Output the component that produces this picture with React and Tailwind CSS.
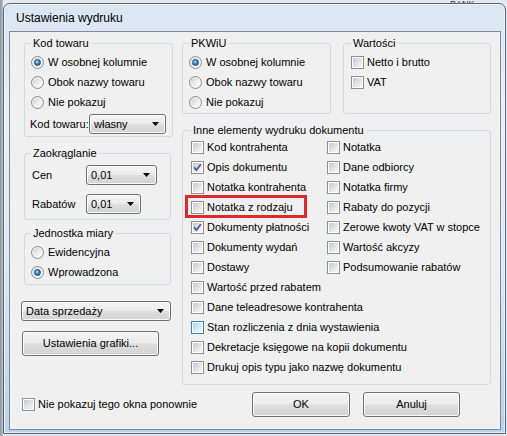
import React from 'react';

const INNE_GRID = [
  [{ label: 'Kod kontrahenta' }, { label: 'Notatka' }],
  [{ label: 'Opis dokumentu', checked: true }, { label: 'Dane odbiorcy' }],
  [{ label: 'Notatka kontrahenta' }, { label: 'Notatka firmy' }],
  [{ label: 'Notatka z rodzaju', marked: true }, { label: 'Rabaty do pozycji' }],
  [{ label: 'Dokumenty płatności', checked: true }, { label: 'Zerowe kwoty VAT w stopce' }],
  [{ label: 'Dokumenty wydań' }, { label: 'Wartość akcyzy' }],
  [{ label: 'Dostawy' }, { label: 'Podsumowanie rabatów' }],
];

const INNE_WIDE = [
  { label: 'Wartość przed rabatem' },
  { label: 'Dane teleadresowe kontrahenta' },
  { label: 'Stan rozliczenia z dnia wystawienia', hover: true },
  { label: 'Dekretacje księgowe na kopii dokumentu' },
  { label: 'Drukuj opis typu jako nazwę dokumentu' },
];

function Radio({ label, checked }) {
  return (
    <div className="flex h-[20px] items-center gap-[4px]">
      <span className="flex h-[13px] w-[13px] shrink-0 items-center justify-center rounded-full border border-[#8b8c8d] bg-[linear-gradient(135deg,#c9cacb_0%,#eeeeee_55%,#ffffff_100%)] shadow-[inset_0_0_0_1px_#f4f4f4]">
        {checked && (
          <span className="h-[7px] w-[7px] rounded-full border border-[#174f80] bg-[radial-gradient(circle_at_40%_35%,#b7e2fb_0%,#3c8bcc_45%,#134a7e_100%)]" />
        )}
      </span>
      <span>{label}</span>
    </div>
  );
}

function Check({ label, checked, hover }) {
  return (
    <div className="flex h-[20px] items-center gap-[3px]">
      <span
        className={`relative flex h-[13px] w-[13px] shrink-0 items-center justify-center border bg-white ${
          hover ? 'border-[#3c7fb1]' : 'border-[#8e8f8f]'
        }`}
      >
        <span
          className={`h-[9px] w-[9px] ${
            hover
              ? 'bg-[linear-gradient(135deg,#9fd5f6_0%,#d6effc_60%,#eef9fe_100%)]'
              : 'bg-[linear-gradient(135deg,#c6c8cb_0%,#e3e4e5_55%,#f6f6f6_100%)]'
          }`}
        />
        {checked && (
          <svg className="absolute left-0 top-0" width="11" height="11" viewBox="0 0 11 11">
            <path d="M2.2 5.4 L4.4 8.2 L8.8 2.2" fill="none" stroke="#4a5d8a" strokeWidth="1.7" />
          </svg>
        )}
      </span>
      <span>{label}</span>
    </div>
  );
}

function Combo({ value, className = '' }) {
  return (
    <div
      className={`flex h-[20px] items-center justify-between rounded-[3px] border border-[#707070] bg-[linear-gradient(#f3f3f3_0%,#ececec_48%,#dedede_52%,#d2d2d2_100%)] pl-[4px] pr-[6px] shadow-[inset_0_0_0_1px_#fbfbfb] ${className}`}
    >
      <span>{value}</span>
      <svg width="7" height="4" viewBox="0 0 7 4">
        <path d="M0 0H7L3.5 4Z" fill="#000" />
      </svg>
    </div>
  );
}

function Button({ children, className = '' }) {
  return (
    <div
      className={`flex items-center justify-center rounded-[3px] border border-[#707070] bg-[linear-gradient(#f3f3f3_0%,#ececec_48%,#dedede_52%,#d2d2d2_100%)] shadow-[inset_0_0_0_1px_#fbfbfb] ${className}`}
    >
      {children}
    </div>
  );
}

function Group({ title, className = '', children }) {
  return (
    <fieldset className={`rounded-[3px] border border-[#d3d9de] ${className}`}>
      <legend className="px-[2px] leading-[14px]">{title}</legend>
      {children}
    </fieldset>
  );
}

export default function App() {
  return (
    <div className="relative h-[436px] w-[507px] overflow-hidden bg-[linear-gradient(90deg,#8d949c_0px,#b9c0c8_3px,#e4e9ef_3px)] font-['Liberation_Sans',Arial,sans-serif] text-[11px] text-black">
      {/* fragment of the window behind */}
      <div className="absolute left-[450px] top-0 text-[9px] leading-[9px] text-[#333]">BANK</div>

      <div className="relative ml-[3px] mt-[3px] flex h-[431px] w-[503px] flex-col rounded-t-[7px] border border-[#5b6874] bg-[linear-gradient(180deg,#d9e5f2_0%,#e8eff8_25%,#dde8f4_60%,#b9d1ea_100%)] pb-[3px] pl-[5px] pr-[4px] shadow-[inset_0_0_0_1px_rgba(255,255,255,0.6)]">
        {/* Title */}
        <div className="flex h-[27px] items-center pl-[7px] text-[12px]">Ustawienia wydruku</div>

        {/* Client area */}
        <div className="flex flex-1 flex-col border border-[#7d8a99] bg-[#f0f0f0] pl-[11px] pt-[4px]">
          <div className="flex items-start gap-[11px]">
            {/* Left column */}
            <div className="flex w-[150px] flex-col">
              <Group title="Kod towaru" className="ml-[3px] w-[147px] px-[6px] pb-[2px] pt-[2px]">
                <Radio label="W osobnej kolumnie" checked />
                <Radio label="Obok nazwy towaru" />
                <Radio label="Nie pokazuj" />
                <div className="-ml-[1px] mt-[2px] flex h-[20px] items-center">
                  <span className="w-[59px]">Kod towaru:</span>
                  <Combo value="własny" className="w-[77px]" />
                </div>
              </Group>

              <Group title="Zaokrąglanie" className="ml-[3px] mt-[9px] w-[147px] px-[6px] pb-[5px] pt-[5px]">
                <div className="ml-[1px] flex h-[20px] items-center">
                  <span className="w-[54px]">Cen</span>
                  <Combo value="0,01" className="w-[71px]" />
                </div>
                <div className="ml-[1px] mt-[9px] flex h-[20px] items-center">
                  <span className="w-[54px]">Rabatów</span>
                  <Combo value="0,01" className="w-[55px]" />
                </div>
              </Group>

              <Group title="Jednostka miary" className="ml-[3px] mt-[6px] w-[147px] px-[6px] pb-[2px] pt-[2px]">
                <Radio label="Ewidencyjna" />
                <Radio label="Wprowadzona" checked />
              </Group>

              <Combo value="Data sprzedaży" className="mt-[16px] w-[150px]" />
              <Button className="ml-[1px] mt-[10px] h-[25px] w-[137px]">Ustawienia grafiki...</Button>
            </div>

            {/* Right column */}
            <div className="flex w-[309px] flex-col">
              <div className="flex items-stretch gap-[12px]">
                <Group title="PKWiU" className="w-[149px] px-[6px] pb-[1px] pt-[2px]">
                  <Radio label="W osobnej kolumnie" checked />
                  <Radio label="Obok nazwy towaru" />
                  <Radio label="Nie pokazuj" />
                </Group>
                <Group title="Wartości" className="w-[148px] px-[7px] pt-[2px]">
                  <Check label="Netto i brutto" />
                  <Check label="VAT" />
                </Group>
              </div>

              <Group title="Inne elementy wydruku dokumentu" className="mt-[9px] pb-[7px] pl-[8px]">
                <div className="grid grid-cols-[136px_1fr]">
                  {INNE_GRID.map(([a, b]) => (
                    <React.Fragment key={a.label}>
                      <div className="relative">
                        <Check {...a} />
                        {a.marked && (
                          <div className="absolute left-[-6px] top-[-2px] h-[23px] w-[122px] border-[3px] border-[#de2a2e]" />
                        )}
                      </div>
                      <Check {...b} />
                    </React.Fragment>
                  ))}
                </div>
                {INNE_WIDE.map((item) => (
                  <Check key={item.label} {...item} />
                ))}
              </Group>
            </div>
          </div>

          {/* Bottom row */}
          <div className="mt-[7px] flex h-[25px] items-center">
            <div className="ml-[1px] w-[230px]">
              <Check label="Nie pokazuj tego okna ponownie" />
            </div>
            <Button className="h-[25px] w-[98px]">OK</Button>
            <Button className="ml-[13px] h-[25px] w-[97px]">Anuluj</Button>
          </div>
        </div>
      </div>
    </div>
  );
}
